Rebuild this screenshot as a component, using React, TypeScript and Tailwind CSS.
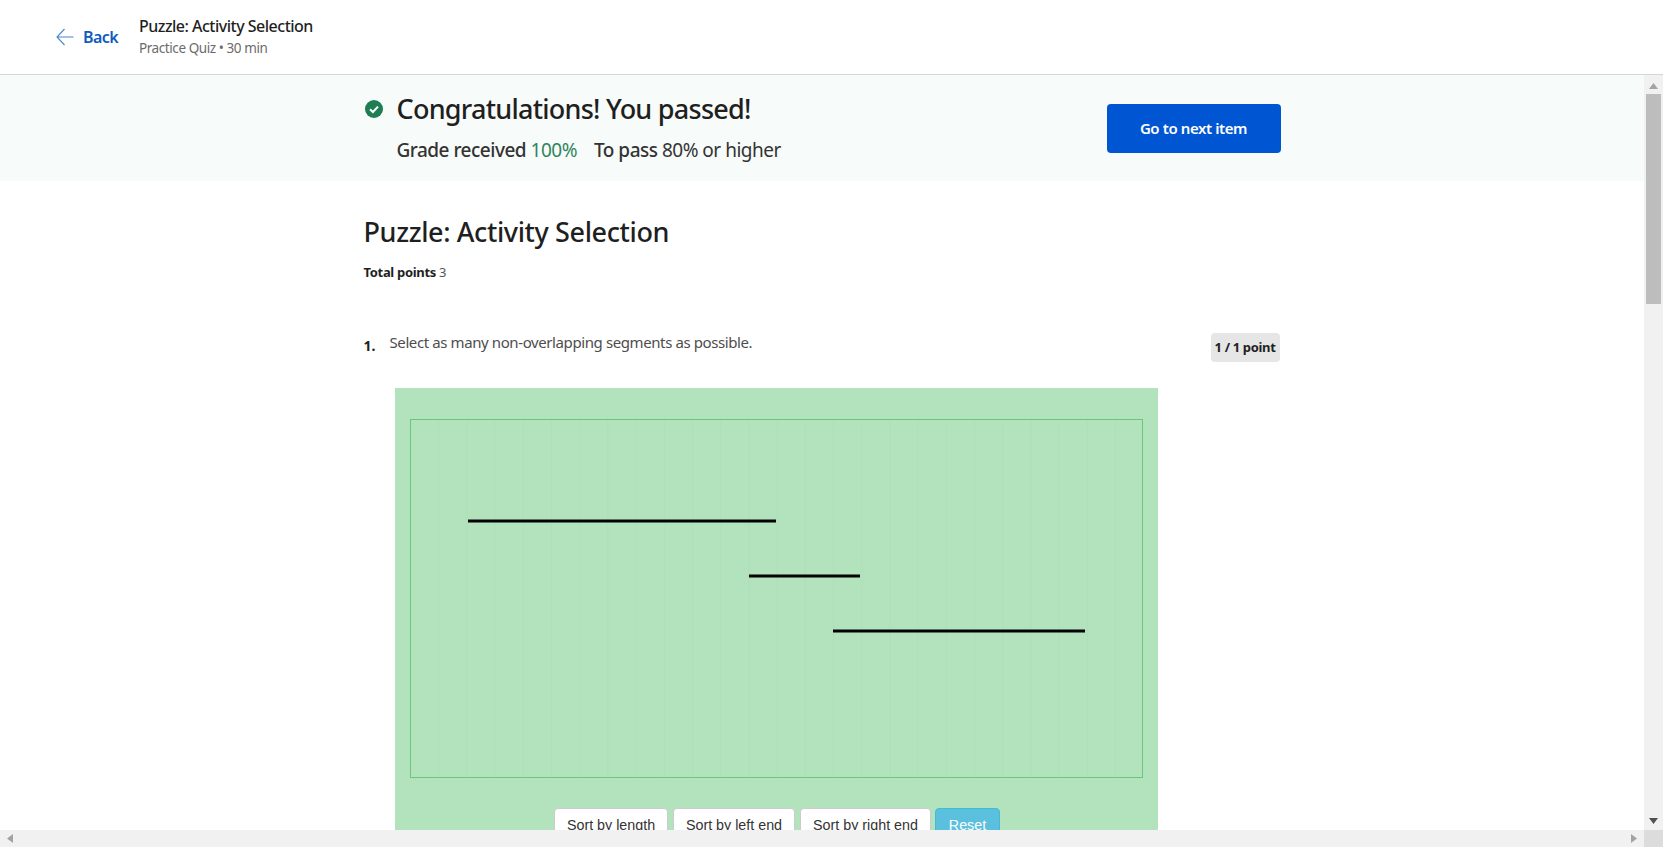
import React from "react";

const segments = [
  { x1: 468, x2: 776, y: 521 },
  { x1: 749, x2: 860, y: 576 },
  { x1: 833, x2: 1085, y: 631 },
];

function Chart() {
  const lines = Array.from({ length: 25 }, (_, i) => i + 1);
  return (
    <svg width="733" height="359" viewBox="0 0 733 359" className="block">
      {lines.map((i) => (
        <line key={i} x1={i * 28.2 + 0.5} x2={i * 28.2 + 0.5} y1="1" y2="358" stroke="#aedfb9" strokeWidth="1" />
      ))}
      <rect x="0.5" y="0.5" width="732" height="358" fill="none" stroke="#6cc878" strokeWidth="1" />
      {segments.map((s) => (
        <line key={s.y} x1={s.x1 - 410} x2={s.x2 - 410} y1={s.y - 419} y2={s.y - 419} stroke="#000" strokeWidth="3" />
      ))}
    </svg>
  );
}

function Tri({ dir, color }: { dir: "up" | "down" | "left" | "right"; color: string }) {
  const pts = {
    up: "0,6 4.5,0 9,6",
    down: "0,0 9,0 4.5,6",
    left: "6,0 6,9 0,4.5",
    right: "0,0 6,4.5 0,9",
  }[dir];
  const horizontal = dir === "left" || dir === "right";
  return (
    <svg width={horizontal ? 6 : 9} height={horizontal ? 9 : 6} viewBox={horizontal ? "0 0 6 9" : "0 0 9 6"}>
      <polygon points={pts} fill={color} />
    </svg>
  );
}

export default function App() {
  return (
    <div className="flex h-[847px] w-[1663px] flex-col overflow-hidden bg-white font-['Noto_Sans',sans-serif] text-[#1f1f1f]">
      <header className="flex h-[75px] shrink-0 items-center border-b border-[#d6d6d6] pl-[56px]">
        <a className="flex items-center gap-[9px] text-[#0f5cc0]">
          <svg width="18" height="18" viewBox="0 0 18 18" fill="none" stroke="#4a86d0" strokeWidth="1.1">
            <path d="M17.5 9H1M8.5 1 1 9l7.5 8" />
          </svg>
          <span className="text-[16px] font-semibold tracking-[-0.6px]">Back</span>
        </a>
        <div className="ml-[21px] flex flex-col gap-[2px]">
          <div className="text-[16px] leading-[20px] font-medium tracking-[-0.5px]">Puzzle: Activity Selection</div>
          <div className="text-[13.5px] leading-[20px] tracking-[-0.42px] text-[#6b6b6b]">Practice Quiz • 30 min</div>
        </div>
      </header>

      <div className="flex min-h-0 flex-1">
        <main className="min-w-0 flex-1 overflow-hidden">
          <section className="h-[106px] bg-[#f7fbfa]">
            <div className="mx-auto flex w-[917px] items-start justify-between">
              <div className="ml-[1px] flex">
                <svg width="18" height="18" viewBox="0 0 18 18" className="mt-[25px] shrink-0">
                  <circle cx="9" cy="9" r="9" fill="#1f7d53" />
                  <path d="M5 9.3 7.9 12 13 6.6" fill="none" stroke="#fff" strokeWidth="2" />
                </svg>
                <div className="ml-[14px] pt-[16px]">
                  <div className="text-[27px] leading-[36px] font-medium tracking-[-0.75px]">Congratulations! You passed!</div>
                  <div className="mt-[11px] text-[19px] leading-[24px] tracking-[-0.5px] text-[#333]">
                    <span className="font-medium">Grade received</span>{" "}
                    <span className="text-[#2f8560]">100%</span>
                    <span className="ml-[17px] font-medium">To pass</span> 80% or higher
                  </div>
                </div>
              </div>
              <button className="mt-[29px] h-[49px] w-[174px] rounded-[4px] bg-[#0056d2] text-[15px] font-semibold tracking-[-0.4px] text-white">
                Go to next item
              </button>
            </div>
          </section>

          <section className="mx-auto w-[917px]">
            <h1 className="mt-[33px] text-[27px] leading-[36px] font-medium tracking-[-0.38px]">Puzzle: Activity Selection</h1>
            <p className="mt-[12px] text-[13px] leading-[20px] tracking-[-0.32px]">
              <span className="font-bold">Total points</span> <span className="text-[#555]">3</span>
            </p>
            <div className="mt-[51px] flex items-start">
              <span className="mt-[1px] w-[26px] text-[14px] leading-[24px] font-bold">1.</span>
              <span className="-mt-[3px] flex-1 text-[15px] leading-[24px] tracking-[-0.4px] text-[#4d4d4d]">
                Select as many non-overlapping segments as possible.
              </span>
              <span className="mr-[1px] flex h-[29px] w-[69px] items-center justify-center rounded-[4px] bg-[#e6e6e6] text-[13px] font-bold tracking-[-0.35px] whitespace-nowrap">
                1 / 1 point
              </span>
            </div>
            <div className="mt-[26px] ml-[31px] w-[763px] bg-[#b2e3bd] px-[15px] pt-[31px]">
              <Chart />
              <div className="mt-[30px] flex h-[40px] justify-center gap-[5px] pl-[2px] font-['Liberation_Sans',sans-serif] text-[14.3px] leading-[20px]">
                <button className="h-[34px] w-[114px] rounded-[4px] border border-[#ccc] bg-white text-[#333]">Sort by length</button>
                <button className="h-[34px] w-[122px] rounded-[4px] border border-[#ccc] bg-white text-[#333]">Sort by left end</button>
                <button className="h-[34px] w-[131px] rounded-[4px] border border-[#ccc] bg-white text-[#333]">Sort by right end</button>
                <button className="-ml-[1px] h-[34px] w-[65px] rounded-[4px] border border-[#46b8da] bg-[#5bc0de] text-white">Reset</button>
              </div>
            </div>
          </section>
        </main>

        <aside className="flex w-[19px] shrink-0 flex-col bg-[#f1f1f1]">
          <div className="flex h-[19px] items-center justify-center pt-[2px]">
            <Tri dir="up" color="#a3a3a3" />
          </div>
          <div className="mx-[2px] h-[210px] bg-[#bdbdbd]" />
          <div className="flex-1" />
          <div className="flex h-[19px] items-center justify-center">
            <Tri dir="down" color="#505050" />
          </div>
        </aside>
      </div>

      <footer className="flex h-[17px] shrink-0 bg-[#f1f1f1]">
        <div className="flex flex-1 items-center justify-between px-[7px]">
          <Tri dir="left" color="#a3a3a3" />
          <Tri dir="right" color="#a3a3a3" />
        </div>
        <div className="w-[19px] bg-[#dcdcdc]" />
      </footer>
    </div>
  );
}
